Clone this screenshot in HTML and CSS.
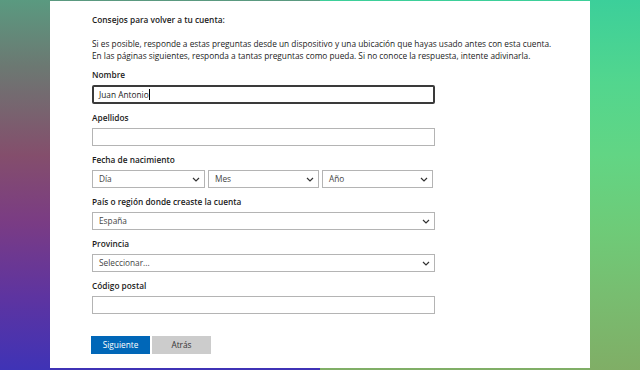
FILE: index.html
```html
<!DOCTYPE html>
<html lang="es">
<head>
    <meta charset="UTF-8">
    <title>Recuperar tu cuenta</title>
    <link rel="stylesheet" href="styles.css">
</head>
<body>
    <div class="panel">
        <h1 class="title">Consejos para volver a tu cuenta:</h1>
        <p class="intro">Si es posible, responde a estas preguntas desde un dispositivo y una ubicación que hayas usado antes con esta cuenta.<br>En las páginas siguientes, responda a tantas preguntas como pueda. Si no conoce la respuesta, intente adivinarla.</p>

        <div class="field">
            <div class="label">Nombre</div>
            <div class="box focused">Juan Antonio<span class="caret"></span></div>
        </div>
        <div class="field">
            <div class="label">Apellidos</div>
            <div class="box"></div>
        </div>
        <div class="field">
            <div class="label">Fecha de nacimiento</div>
            <div class="date">
                <div class="box select"><span>Día</span><svg width="8" height="5" viewBox="0 0 8 5"><path d="M1 1l3 3 3-3" fill="none" stroke="#333" stroke-width="1.2"/></svg></div>
                <div class="box select"><span>Mes</span><svg width="8" height="5" viewBox="0 0 8 5"><path d="M1 1l3 3 3-3" fill="none" stroke="#333" stroke-width="1.2"/></svg></div>
                <div class="box select"><span>Año</span><svg width="8" height="5" viewBox="0 0 8 5"><path d="M1 1l3 3 3-3" fill="none" stroke="#333" stroke-width="1.2"/></svg></div>
            </div>
        </div>
        <div class="field">
            <div class="label">País o región donde creaste la cuenta</div>
            <div class="box select"><span>España</span><svg width="8" height="5" viewBox="0 0 8 5"><path d="M1 1l3 3 3-3" fill="none" stroke="#333" stroke-width="1.2"/></svg></div>
        </div>
        <div class="field">
            <div class="label">Provincia</div>
            <div class="box select"><span>Seleccionar...</span><svg width="8" height="5" viewBox="0 0 8 5"><path d="M1 1l3 3 3-3" fill="none" stroke="#333" stroke-width="1.2"/></svg></div>
        </div>
        <div class="field">
            <div class="label">Código postal</div>
            <div class="box"></div>
        </div>

        <div class="buttons">
            <div class="btn primary">Siguiente</div>
            <div class="btn secondary">Atrás</div>
        </div>
    </div>
</body>
</html>
```

FILE: styles.css
```css
html, body {
    margin: 0;
    height: 370px;
    overflow: hidden;
}
body {
    font-family: "Open Sans", "Noto Sans", sans-serif;
    font-size: 8.3px;
    color: #1b1b1b;
    background:
        linear-gradient(to bottom, #5a9a80 0%, #6c7872 18%, #844e6c 42%, #7a3c84 60%, #5e34a0 80%, #3f33b6 100%) left top / 50% 100% no-repeat,
        linear-gradient(to bottom, #3ccf9a 0%, #52d68e 22%, #62d584 42%, #6ecb78 62%, #78bd70 80%, #80ae66 100%) right top / 50% 100% no-repeat;
}
.panel {
    box-sizing: border-box;
    width: 540px;
    height: 367px;
    margin: 1px 0 0 50px;
    padding: 12px 0 0 42px;
    background: #fff;
}
.title {
    margin: 0;
    font-size: 8.3px;
    font-weight: 600;
    line-height: 14px;
}
.intro {
    margin: 11px 0 6px;
    line-height: 12px;
}
.field {
    width: 343px;
    margin-bottom: 7px;
}
.label {
    font-weight: 600;
    line-height: 14px;
    margin-bottom: 3px;
}
.box {
    box-sizing: border-box;
    height: 18px;
    border: 1px solid #b4b4b4;
    padding: 0 6px;
    line-height: 16px;
    color: #333;
    background: #fff;
}
.box.focused {
    height: 19px;
    border: 2px solid #3a3a3a;
    border-radius: 2px;
    padding: 0 5px;
    line-height: 15px;
    color: #1b1b1b;
}
.caret {
    display: inline-block;
    width: 1px;
    height: 11px;
    background: #000;
    vertical-align: -2px;
}
.select {
    display: flex;
    align-items: center;
    justify-content: space-between;
    padding-right: 4px;
    color: #444;
}
.date {
    display: grid;
    grid-template-columns: 113px 111px 111px;
    gap: 3px;
}
.buttons {
    display: flex;
    gap: 2px;
    margin: 22px 0 0 -1px;
}
.btn {
    width: 59px;
    height: 18px;
    line-height: 18px;
    text-align: center;
}
.primary {
    background: #0067b8;
    color: #fff;
}
.secondary {
    background: #cccccc;
    color: #333;
}
```
